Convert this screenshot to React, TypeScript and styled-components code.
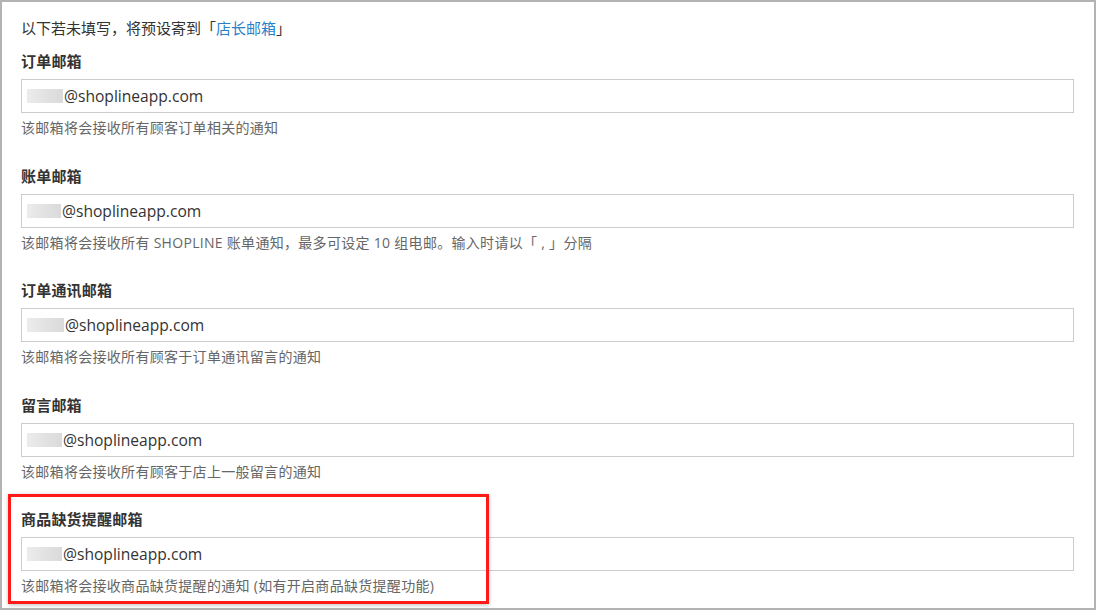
import React from "react";
import styled, { createGlobalStyle } from "styled-components";

const Global = createGlobalStyle`
  html, body { margin: 0; padding: 0; background: #fff; }
  body { font-family: "Open Sans", "Noto Sans CJK SC", sans-serif; color: #333; }
  * { box-sizing: border-box; }
`;

const Frame = styled.div`
  position: relative;
  width: 1096px;
  height: 610px;
  border: 2px solid #b3b3b3;
  padding: 15px 20px 0 19px;
  background: #fff;
  overflow: hidden;
`;

const Intro = styled.p`
  margin: 0 0 12px;
  font-size: 15px;
  line-height: 22px;
  color: #333;
`;

const Link = styled.a`
  color: #2a7fc9;
  text-decoration: none;
`;

const Section = styled.div`
  display: flex;
  flex-direction: column;
  margin-bottom: 27.6px;
`;

const Label = styled.label`
  font-size: 15px;
  font-weight: 700;
  line-height: 20px;
  letter-spacing: 0.2px;
  color: #333;
  margin-bottom: 8px;
`;

const InputBox = styled.div`
  display: flex;
  align-items: center;
  height: 34px;
  border: 1px solid #ccc;
  padding: 0 6px 0 5px;
  font-size: 15.6px;
  color: #333;
`;

const Masked = styled.span<{ $w: number }>`
  display: inline-block;
  width: ${(p) => p.$w}px;
  height: 14px;
  margin-right: 1px;
  background: linear-gradient(90deg, #ececec 0%, #e2e2e2 50%, #dadada 100%);
`;

const Help = styled.div`
  margin-top: 5px;
  font-size: 14px;
  line-height: 20px;
  letter-spacing: 0.3px;
  color: #666;
`;

const Highlight = styled.div`
  position: absolute;
  left: 6px;
  top: 492px;
  width: 481px;
  height: 110px;
  border: 3px solid #ff1a1a;
  box-shadow: 0 1px 4px rgba(0, 0, 0, 0.25);
  pointer-events: none;
`;

const fields = [
  { label: "订单邮箱", help: "该邮箱将会接收所有顾客订单相关的通知", w: 36 },
  { label: "账单邮箱", help: "该邮箱将会接收所有 SHOPLINE 账单通知，最多可设定 10 组电邮。输入时请以「 , 」分隔", w: 34 },
  { label: "订单通讯邮箱", help: "该邮箱将会接收所有顾客于订单通讯留言的通知", w: 37 },
  { label: "留言邮箱", help: "该邮箱将会接收所有顾客于店上一般留言的通知", w: 35 },
  { label: "商品缺货提醒邮箱", help: "该邮箱将会接收商品缺货提醒的通知 (如有开启商品缺货提醒功能)", w: 35 },
];

export default function App() {
  return (
    <>
      <Global />
      <Frame>
        <Intro>
          以下若未填写，将预设寄到「<Link href="#">店长邮箱</Link>」
        </Intro>
        {fields.map((f) => (
          <Section key={f.label}>
            <Label>{f.label}</Label>
            <InputBox>
              <Masked $w={f.w} />
              @shoplineapp.com
            </InputBox>
            <Help>{f.help}</Help>
          </Section>
        ))}
        <Highlight />
      </Frame>
    </>
  );
}
